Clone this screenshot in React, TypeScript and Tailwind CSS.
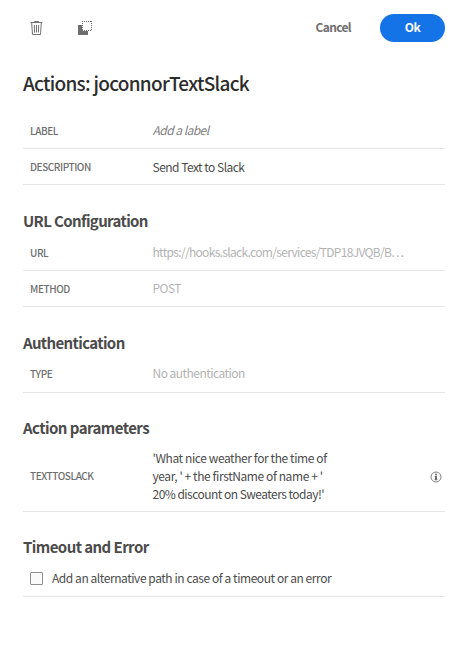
import type { ReactNode } from "react";

function TrashIcon() {
  return (
    <svg width="14" height="14" viewBox="0 0 14 14" fill="none" stroke="#747474">
      <path d="M0.5 1.5H12.5M4.5 1.5V0.5H8.5V1.5M1.7 2L2.5 13.5H10.5L11.3 2" />
      <path d="M4.3 4L4.6 11.5M6.5 4V11.5M8.7 4L8.4 11.5" />
    </svg>
  );
}

function DuplicateIcon() {
  return (
    <svg width="15" height="14" viewBox="0 0 15 14" fill="none">
      <path d="M0 4H4V10H10V14H0Z" fill="#6e6e6e" />
      <path d="M4 0.5H14M4 9.5H14" stroke="#6e6e6e" strokeDasharray="1 1" />
      <path d="M4.5 0V10M13.5 0V10" stroke="#6e6e6e" strokeDasharray="1 1" />
    </svg>
  );
}

function InfoIcon() {
  return (
    <svg width="12" height="12" viewBox="0 0 12 12" fill="none">
      <circle cx="6" cy="6" r="5" stroke="#808080" />
      <path d="M5 2.8H7V4.2H5ZM4.6 5H7V8.2H7.4V9.2H4.6V8.2H5V6H4.6Z" fill="#6e6e6e" />
    </svg>
  );
}

function Section({ children, tracking = "tracking-[-0.63px]", lift = "leading-[21px]" }: { children: ReactNode; tracking?: string; lift?: string }) {
  return (
    <h2 className={`mt-[25px] h-[25px] whitespace-nowrap text-[15px] font-bold text-[#4b4b4b] ${lift} ${tracking}`}>
      {children}
    </h2>
  );
}

function Row({ label, children, extra, height = "h-9", lift = "pb-px", labelLift = "pb-0", tracking = "tracking-[-0.52px]" }: { label: string; children: ReactNode; extra?: ReactNode; height?: string; lift?: string; labelLift?: string; tracking?: string }) {
  return (
    <div className={`flex items-center border-b border-[#e6e6e6] pl-[7px] ${height}`}>
      <div className={`w-[122.5px] shrink-0 text-[10px] leading-4 font-medium tracking-[-0.42px] text-[#6e6e6e] ${labelLift}`}>{label}</div>
      <div className={`min-w-0 flex-1 whitespace-nowrap text-[12px] leading-[18px] text-[#4b4b4b] ${lift} ${tracking}`}>{children}</div>
      {extra}
    </div>
  );
}

export default function App() {
  return (
    <main className="h-[655px] w-[469px] bg-white pr-6 pl-[23px] font-['Noto_Sans_CJK_SC',sans-serif]">
      <header className="flex h-14 items-center">
        <button className="ml-[7px]" aria-label="Delete"><TrashIcon /></button>
        <button className="ml-[34px]" aria-label="Duplicate"><DuplicateIcon /></button>
        <div className="flex-1" />
        <button className="mr-[29px] pb-[2px] text-[12px] font-bold tracking-[-0.65px] text-[#6e6e6e]">Cancel</button>
        <button className="h-7 w-[65px] rounded-full bg-[#1473e6] pb-[2px] text-[12px] font-bold tracking-[-0.5px] text-white">Ok</button>
      </header>
      <h1 className="h-[57px] whitespace-nowrap pt-3 text-[19px] leading-[30px] font-medium tracking-[-0.73px] text-[#2c2c2c]">Actions: joconnorTextSlack</h1>
      <Row label="LABEL" tracking="tracking-[-0.53px]"><span className="text-[#808080] italic">Add a label</span></Row>
      <Row label="DESCRIPTION" lift="pt-px">Send Text to Slack</Row>
      <Section>URL Configuration</Section>
      <Row label="URL" tracking="tracking-[-0.68px]"><span className="text-[#b3b3b3]">https://hooks.slack.com/services/TDP18JVQB/B…</span></Row>
      <Row label="METHOD"><span className="text-[#b3b3b3]">POST</span></Row>
      <Section>Authentication</Section>
      <Row label="TYPE" labelLift="pb-[2px]"><span className="relative -top-px text-[#b3b3b3]">No authentication</span></Row>
      <Section tracking="tracking-[-0.55px]" lift="leading-[19px]">Action parameters</Section>
      <Row
        label="TEXTTOSLACK"
        height="h-[69px]"
        lift="pb-[3px]"
        labelLift="pb-[2px]"
        tracking="tracking-[-0.41px]"
        extra={<div className="mr-[3px]"><InfoIcon /></div>}
      >
        'What nice weather for the time of<br />year, ' + the firstName of name + '<br />
        <span className="tracking-[-0.53px]">20% discount on Sweaters today!'</span>
      </Row>
      <Section tracking="tracking-[-0.57px]" lift="leading-[19px]">Timeout and Error</Section>
      <div className="flex h-[35px] items-center border-b border-[#e6e6e6] pl-[7px]">
        <span className="mb-px h-[13px] w-[13px] rounded-[1px] border border-[#8e8e8e] bg-[#fafafa]" />
        <span className="ml-[9px] pb-[3px] whitespace-nowrap text-[12px] leading-[18px] tracking-[-0.44px] text-[#4b4b4b]">Add an alternative path in case of a timeout or an error</span>
      </div>
    </main>
  );
}
